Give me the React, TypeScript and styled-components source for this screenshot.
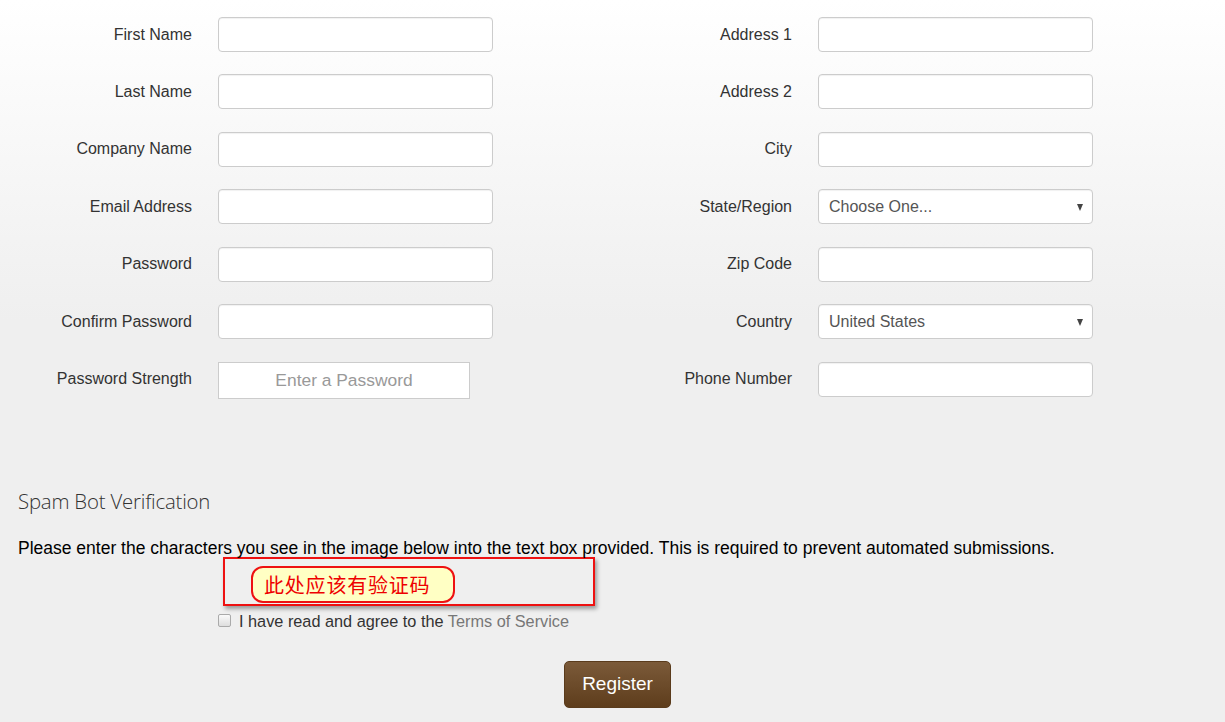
import React from "react";
import styled, { createGlobalStyle } from "styled-components";

const Global = createGlobalStyle`
  html, body { margin: 0; padding: 0; }
  body {
    background: #efefef;
    font-family: "Liberation Sans", Arial, sans-serif;
    color: #333;
  }
`;

const Page = styled.div`
  width: 1225px;
  min-height: 722px;
  background: linear-gradient(to bottom, #ffffff 0px, #efefef 320px, #efefef 100%);
  box-sizing: border-box;
  padding-top: 17px;
  overflow: hidden;
`;

const FormGrid = styled.div`
  display: grid;
  grid-template-columns: 600px 600px;
`;

const Column = styled.div`
  display: flex;
  flex-direction: column;
  gap: 22.45px;
`;

const Row = styled.div`
  display: flex;
  align-items: center;
  gap: 26px;
  height: 35px;
`;

const Label = styled.label`
  width: 192px;
  text-align: right;
  font-size: 16px;
  color: #333;
  line-height: 20px;
`;

const Input = styled.input`
  width: 275px;
  height: 35px;
  box-sizing: border-box;
  border: 1px solid #ccc;
  border-radius: 4px;
  background: #fff;
  box-shadow: inset 0 1px 1px rgba(0, 0, 0, 0.06);
  padding: 0 10px;
  font-family: "Liberation Sans", Arial, sans-serif;
  font-size: 16px;
  outline: none;
`;

const SelectBox = styled.div`
  position: relative;
  width: 275px;
  height: 35px;
  box-sizing: border-box;
  border: 1px solid #ccc;
  border-radius: 4px;
  background: #fff;
  box-shadow: inset 0 1px 1px rgba(0, 0, 0, 0.06);
  display: flex;
  align-items: center;
  padding: 0 10px;
  font-size: 16px;
  color: #555;
`;

const Arrow = styled.span`
  position: absolute;
  right: 9px;
  top: 14px;
  width: 0;
  height: 0;
  border-left: 3.5px solid transparent;
  border-right: 3.5px solid transparent;
  border-top: 7px solid #444;
`;

const Strength = styled.div`
  width: 252px;
  height: 37px;
  margin-top: 2px;
  box-sizing: border-box;
  border: 1px solid #ccc;
  background: #fff;
  display: flex;
  align-items: center;
  justify-content: center;
  font-size: 17.4px;
  color: #999;
`;

const Section = styled.div`
  padding: 0 18px;
  margin-top: 90px;
`;

const Heading = styled.h3`
  margin: 0;
  font-family: "Open Sans", sans-serif;
  font-weight: 300;
  font-size: 20.4px;
  line-height: 28px;
  color: #333;
  letter-spacing: -0.2px;
`;

const Para = styled.p`
  margin: 23px 0 0;
  font-size: 17.5px;
  line-height: 20px;
  color: #000;
  white-space: nowrap;
`;

const Annotation = styled.div`
  margin: -1px 0 0 205px;
  width: 372px;
  height: 49px;
  box-sizing: border-box;
  border: 2px solid #ee1111;
  box-shadow: 2px 3px 4px rgba(0, 0, 0, 0.35);
  padding: 7px 0 0 26px;
`;

const Bubble = styled.div`
  width: 204px;
  height: 37px;
  box-sizing: border-box;
  border: 2px solid #ee1111;
  border-radius: 12px;
  background: #ffffc4;
  display: flex;
  align-items: center;
  padding-left: 11px;
  font-family: "Noto Sans CJK SC", sans-serif;
  font-weight: 400;
  font-size: 20px;
  color: #ee0000;
  letter-spacing: 0.8px;
`;

const AgreeRow = styled.div`
  display: flex;
  align-items: center;
  gap: 8px;
  margin: 5px 0 0 200px;
  font-size: 16.3px;
  color: #333;
  line-height: 20px;
`;

const Check = styled.span`
  width: 11px;
  height: 11px;
  border: 1px solid #aaa;
  border-radius: 2px;
  background: linear-gradient(#fafafa, #dedede);
`;

const Link = styled.span`
  color: #777;
`;

const ButtonWrap = styled.div`
  display: flex;
  justify-content: flex-start;
  padding-left: 564px;
  margin-top: 30px;
`;

const Button = styled.button`
  width: 107px;
  height: 47px;
  border: 1px solid #5a3b1c;
  border-radius: 5px;
  background: linear-gradient(to bottom, #7b5a39, #5e3d1c);
  color: #fff;
  font-family: "Liberation Sans", Arial, sans-serif;
  font-size: 19px;
  cursor: pointer;
`;

const leftFields = ["First Name", "Last Name", "Company Name", "Email Address", "Password", "Confirm Password"];

export default function App() {
  return (
    <Page>
      <Global />
      <FormGrid>
        <Column>
          {leftFields.map((f) => (
            <Row key={f}>
              <Label>{f}</Label>
              <Input type={f.includes("Password") ? "password" : "text"} />
            </Row>
          ))}
          <Row>
            <Label>Password Strength</Label>
            <Strength>Enter a Password</Strength>
          </Row>
        </Column>
        <Column>
          <Row>
            <Label>Address 1</Label>
            <Input />
          </Row>
          <Row>
            <Label>Address 2</Label>
            <Input />
          </Row>
          <Row>
            <Label>City</Label>
            <Input />
          </Row>
          <Row>
            <Label>State/Region</Label>
            <SelectBox>
              Choose One...
              <Arrow />
            </SelectBox>
          </Row>
          <Row>
            <Label>Zip Code</Label>
            <Input />
          </Row>
          <Row>
            <Label>Country</Label>
            <SelectBox>
              United States
              <Arrow />
            </SelectBox>
          </Row>
          <Row>
            <Label>Phone Number</Label>
            <Input />
          </Row>
        </Column>
      </FormGrid>
      <Section>
        <Heading>Spam Bot Verification</Heading>
        <Para>
          Please enter the characters you see in the image below into the text box provided. This is required to prevent automated submissions.
        </Para>
        <Annotation>
          <Bubble>此处应该有验证码</Bubble>
        </Annotation>
        <AgreeRow>
          <Check />
          <span>
            I have read and agree to the <Link>Terms of Service</Link>
          </span>
        </AgreeRow>
      </Section>
      <ButtonWrap>
        <Button>Register</Button>
      </ButtonWrap>
    </Page>
  );
}
